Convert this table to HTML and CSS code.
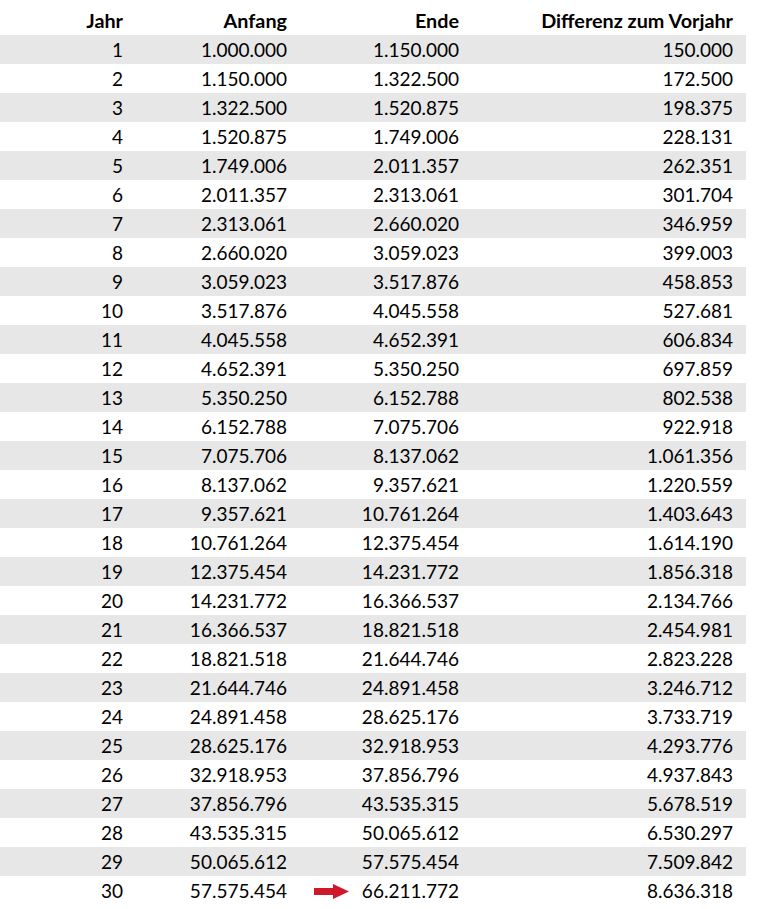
FILE: index.html
```html
<!DOCTYPE html>
<html lang="de">
<head>
<meta charset="utf-8">
<title>Tabelle</title>
<link rel="stylesheet" href="styles.css">
</head>
<body>
<table class="tbl">
<colgroup><col class="c1"><col class="c2"><col class="c3"><col class="c4"></colgroup>
<thead>
<tr><th>Jahr</th><th>Anfang</th><th>Ende</th><th class="last">Differenz zum Vorjahr</th></tr>
</thead>
<tbody>
<tr><td>1</td><td>1.000.000</td><td>1.150.000</td><td class="last">150.000</td></tr>
<tr><td>2</td><td>1.150.000</td><td>1.322.500</td><td class="last">172.500</td></tr>
<tr><td>3</td><td>1.322.500</td><td>1.520.875</td><td class="last">198.375</td></tr>
<tr><td>4</td><td>1.520.875</td><td>1.749.006</td><td class="last">228.131</td></tr>
<tr><td>5</td><td>1.749.006</td><td>2.011.357</td><td class="last">262.351</td></tr>
<tr><td>6</td><td>2.011.357</td><td>2.313.061</td><td class="last">301.704</td></tr>
<tr><td>7</td><td>2.313.061</td><td>2.660.020</td><td class="last">346.959</td></tr>
<tr><td>8</td><td>2.660.020</td><td>3.059.023</td><td class="last">399.003</td></tr>
<tr><td>9</td><td>3.059.023</td><td>3.517.876</td><td class="last">458.853</td></tr>
<tr><td>10</td><td>3.517.876</td><td>4.045.558</td><td class="last">527.681</td></tr>
<tr><td>11</td><td>4.045.558</td><td>4.652.391</td><td class="last">606.834</td></tr>
<tr><td>12</td><td>4.652.391</td><td>5.350.250</td><td class="last">697.859</td></tr>
<tr><td>13</td><td>5.350.250</td><td>6.152.788</td><td class="last">802.538</td></tr>
<tr><td>14</td><td>6.152.788</td><td>7.075.706</td><td class="last">922.918</td></tr>
<tr><td>15</td><td>7.075.706</td><td>8.137.062</td><td class="last">1.061.356</td></tr>
<tr><td>16</td><td>8.137.062</td><td>9.357.621</td><td class="last">1.220.559</td></tr>
<tr><td>17</td><td>9.357.621</td><td>10.761.264</td><td class="last">1.403.643</td></tr>
<tr><td>18</td><td>10.761.264</td><td>12.375.454</td><td class="last">1.614.190</td></tr>
<tr><td>19</td><td>12.375.454</td><td>14.231.772</td><td class="last">1.856.318</td></tr>
<tr><td>20</td><td>14.231.772</td><td>16.366.537</td><td class="last">2.134.766</td></tr>
<tr><td>21</td><td>16.366.537</td><td>18.821.518</td><td class="last">2.454.981</td></tr>
<tr><td>22</td><td>18.821.518</td><td>21.644.746</td><td class="last">2.823.228</td></tr>
<tr><td>23</td><td>21.644.746</td><td>24.891.458</td><td class="last">3.246.712</td></tr>
<tr><td>24</td><td>24.891.458</td><td>28.625.176</td><td class="last">3.733.719</td></tr>
<tr><td>25</td><td>28.625.176</td><td>32.918.953</td><td class="last">4.293.776</td></tr>
<tr><td>26</td><td>32.918.953</td><td>37.856.796</td><td class="last">4.937.843</td></tr>
<tr><td>27</td><td>37.856.796</td><td>43.535.315</td><td class="last">5.678.519</td></tr>
<tr><td>28</td><td>43.535.315</td><td>50.065.612</td><td class="last">6.530.297</td></tr>
<tr><td>29</td><td>50.065.612</td><td>57.575.454</td><td class="last">7.509.842</td></tr>
<tr><td>30</td><td>57.575.454</td><td><svg class="arrow" width="35" height="15" viewBox="0 0 35 15"><path d="M0 4H19V0L35 7.5L19 15V11H0Z" fill="#d0182d"/></svg>66.211.772</td><td class="last">8.636.318</td></tr>
</tbody>
</table>
</body>
</html>
```

FILE: styles.css
```css
html, body {
  margin: 0;
  padding: 0;
  background: #ffffff;
}
body {
  padding-top: 6px;
  font-family: Lato, "Open Sans", sans-serif;
  font-size: 19px;
  color: #000000;
}
.tbl {
  border-collapse: collapse;
  border-spacing: 0;
  width: 746px;
  table-layout: fixed;
}
.c1 { width: 123px; }
.c2 { width: 164px; }
.c3 { width: 172px; }
.c4 { width: 287px; }
.tbl th,
.tbl td {
  height: 29px;
  padding: 0;
  text-align: right;
  vertical-align: middle;
  white-space: nowrap;
  line-height: 29px;
}
.tbl th {
  font-weight: 700;
  font-size: 19.8px;
}
.tbl .last {
  padding-right: 13px;
}
.tbl tbody tr:nth-child(odd) {
  background: #e7e7e7;
}
.arrow {
  vertical-align: middle;
  margin-right: 13px;
  position: relative;
  top: -2px;
}
```
